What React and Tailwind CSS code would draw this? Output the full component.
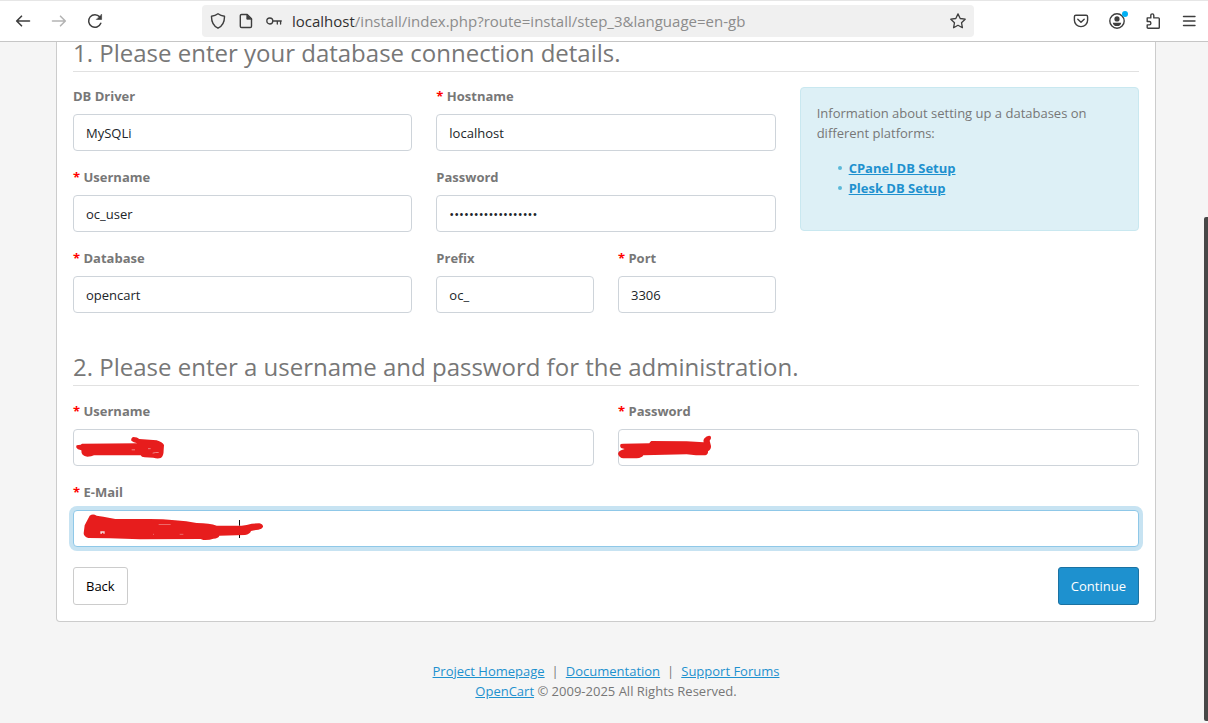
import React from "react";

function Svg({ className = "", w = 16, h = 16, children, ...rest }) {
  return (
    <svg
      width={w}
      height={h}
      viewBox={`0 0 ${w} ${h}`}
      fill="none"
      stroke="currentColor"
      strokeWidth="1.4"
      strokeLinecap="round"
      strokeLinejoin="round"
      className={`shrink-0 ${className}`}
      aria-hidden="true"
      {...rest}
    >
      {children}
    </svg>
  );
}

function BrowserBar() {
  return (
    <header className="flex h-[42px] shrink-0 items-center border-t border-b border-t-[#e6e6e6] border-b-[#c6c6c6] bg-white pr-[11px] text-[#3e3e3e]">
      <nav className="flex w-[202px] shrink-0 items-center gap-5 pl-[15px]">
        <button aria-label="Go back" className="block">
          <Svg strokeWidth="1.6">
            <path d="M14.5 8H1.8M6.5 3.2 1.7 8l4.8 4.8" />
          </Svg>
        </button>
        <button aria-label="Go forward" className="block text-[#b4b4b4]" disabled>
          <Svg strokeWidth="1.6">
            <path d="M1.5 8h12.7M9.5 3.2 14.3 8l-4.8 4.8" />
          </Svg>
        </button>
        <button aria-label="Reload" className="block">
          <Svg>
            <path d="M13.8 10.3A6.3 6.3 0 1 1 12.8 4" strokeWidth="1.5" />
            <path d="M14.6 1.500v5h-5z" fill="currentColor" strokeWidth="0.6" />
          </Svg>
        </button>
      </nav>
      <div className="flex h-8 min-w-0 flex-1 items-center rounded-[4px] bg-[#f0f0f0] px-2">
        <div className="flex items-center gap-3">
          <Svg>
            <path d="M8 .8c2 1.600 4.200 2.300 6.500 2.500.1 5.500-1.800 9.600-6.500 11.900C3.300 12.900 1.400 8.800 1.500 3.300 3.800 3.100 6 2.400 8 .8z" />
          </Svg>
          <Svg>
            <path d="M3.600 1.500h5.600l4.300 4.300v7.400c0 .8-.5 1.300-1.300 1.300H3.600c-.8 0-1.300-.5-1.300-1.300V2.800c0-.8.5-1.300 1.300-1.300z" />
            <path d="M8.800 1.500v4.700h4.700z" fill="currentColor" strokeWidth="0.8" />
          </Svg>
          <Svg strokeWidth="1.3">
            <circle cx="3.800" cy="8" r="3" />
            <path d="M7 8h8.300M11.300 8v3M14.600 8v3" />
          </Svg>
        </div>
        <div className="min-w-0 flex-1 truncate pl-[10px] text-[15px] leading-5 text-[#8c8c8c]">
          <span className="text-[#303030]">localhost</span>
          /install/index.php?route=install/step_3&amp;language=en-gb
        </div>
        <button aria-label="Bookmark this page" className="block">
          <Svg>
            <path d="m8 .9 2.200 4.600 5 .7-3.700 3.500.9 5L8 12.300l-4.400 2.400.9-5L.8 6.200l5-.7z" strokeWidth="1.3" />
          </Svg>
        </button>
      </div>
      <div className="flex items-center gap-5 pl-[99px]">
        <button aria-label="Save to Pocket" className="block">
          <Svg>
            <path d="M2.900 2.200h10.200c.9 0 1.500.6 1.500 1.500v3.500c0 3.700-2.900 6.400-6.600 6.400S1.400 10.900 1.400 7.200V3.700c0-.9.600-1.500 1.500-1.500z" />
            <path d="M4.800 6.200 8 9.300l3.200-3.100" />
          </Svg>
        </button>
        <button aria-label="Account" className="relative block">
          <Svg>
            <circle cx="8" cy="8" r="7.2" />
            <circle cx="8" cy="5.900" r="2.6" fill="currentColor" stroke="none" />
            <path d="M3.800 9.700h8.400c0 2-1.800 3.400-4.200 3.400s-4.200-1.400-4.200-3.400z" fill="currentColor" stroke="none" />
          </Svg>
          <span className="absolute -top-[2px] -right-[3px] size-[6px] rounded-full bg-[#00b0f4]" />
        </button>
        <button aria-label="Extensions" className="block">
          <Svg>
            <path d="M2.200 4.900h3.600V2.400a1.500 1.500 0 0 1 3 0v2.500h4.600c.5 0 .9.400.9.900v8.600c0 .5-.4.900-.9.900H3.100c-.5 0-.9-.4-.9-.9v-2.500h2a1.700 1.700 0 0 0 0-3.400h-2z" />
          </Svg>
        </button>
        <button aria-label="Open application menu" className="block">
          <Svg>
            <path d="M2.500 3.500h11.500M2.500 8h11.500M2.500 12.500h11.500" />
          </Svg>
        </button>
      </div>
    </header>
  );
}

const control =
  "block h-[37px] w-full appearance-none rounded-[4px] border bg-white px-3 text-[13px] leading-5 text-[#212529] outline-none";

function Field({ id, label, required, className = "", children }) {
  return (
    <div className={className}>
      <label htmlFor={id} className="mb-[9px] block text-[13px] leading-[18px] font-bold text-[#777]">
        {required && <span className="text-[#f00]">* </span>}
        {label}
      </label>
      <div className="relative">{children}</div>
    </div>
  );
}

function TextInput({ focused, ...props }) {
  const look = focused
    ? "border-[#8fc8e8] shadow-[0_0_0_4px_#c7e3f2]"
    : "border-[#ced4da]";
  return <input className={`${control} ${look}`} {...props} />;
}

function Scribble({ box, d, children }) {
  return (
    <svg
      width="200"
      height="37"
      viewBox={box}
      className="pointer-events-none absolute top-0 left-0"
      aria-hidden="true"
    >
      <path d={d} fill="#e71d1d" />
      {children}
    </svg>
  );
}

function Legend({ children }) {
  return (
    <h2 className="border-b border-[#e1e1e1] pb-[7px] text-[24px] leading-[22px] text-[#777]">
      {children}
    </h2>
  );
}

function TextLink({ children }) {
  return (
    <a href="#" className="text-[#1e91cf] underline">
      {children}
    </a>
  );
}

function GuideItem({ children }) {
  return (
    <li className="flex items-center gap-[7px]">
      <span className="size-1 rounded-full bg-[#5bb9d8]" />
      <TextLink>{children}</TextLink>
    </li>
  );
}

export default function App() {
  return (
    <div className="relative flex min-h-screen flex-col bg-[#f5f5f5] font-['Open_Sans','Noto_Sans',sans-serif] text-[13px] leading-5 text-[#777]">
      <BrowserBar />
      <main className="mr-[52px] ml-[56px]">
        <form
          className="rounded-b-[4px] border border-t-0 border-[#ccc] bg-white px-4 pb-4"
          onSubmit={(e) => e.preventDefault()}
        >
          <Legend>1. Please enter your database connection details.</Legend>
          <div className="mt-[15px] grid grid-cols-3 gap-x-6">
            <div className="col-span-2 grid grid-cols-4 gap-x-6 gap-y-[17px]">
              <Field id="db-driver" label="DB Driver" className="col-span-2">
                <select id="db-driver" className={`${control} border-[#ced4da]`}>
                  <option>MySQLi</option>
                </select>
              </Field>
              <Field id="db-host" label="Hostname" required className="col-span-2">
                <TextInput id="db-host" defaultValue="localhost" />
              </Field>
              <Field id="db-user" label="Username" required className="col-span-2">
                <TextInput id="db-user" defaultValue="oc_user" />
              </Field>
              <Field id="db-pass" label="Password" className="col-span-2">
                <TextInput id="db-pass" type="password" defaultValue="opencart-database1" />
              </Field>
              <Field id="db-name" label="Database" required className="col-span-2">
                <TextInput id="db-name" defaultValue="opencart" />
              </Field>
              <Field id="db-prefix" label="Prefix">
                <TextInput id="db-prefix" defaultValue="oc_" />
              </Field>
              <Field id="db-port" label="Port" required>
                <TextInput id="db-port" defaultValue="3306" />
              </Field>
            </div>
            <aside className="self-start rounded-[4px] border border-[#c9e8f0] bg-[#ddf0f6] px-4 pt-[15px] pb-[17px]">
              <p>Information about setting up a databases on different platforms:</p>
              <ul className="my-[15px] pl-[21px] font-bold">
                <GuideItem>CPanel DB Setup</GuideItem>
                <GuideItem>Plesk DB Setup</GuideItem>
              </ul>
            </aside>
          </div>
          <div className="mt-[43px]">
            <Legend>2. Please enter a username and password for the administration.</Legend>
          </div>
          <div className="mt-4 grid grid-cols-2 gap-x-6 gap-y-[17px]">
            <Field id="admin-user" label="Username" required>
              <TextInput id="admin-user" />
              <Scribble
                box="69 87 600 111"
                d="M80 136Q76 143 84 148L94 151Q93 168 112 170Q125 170 132 166L272 166Q274 172 284 172L310 173Q322 177 332 174Q341 170 341 150L342 135Q337 126 320 121L268 117Q262 111 250 111Q242 114 244 122Q250 127 262 130L96 131L92 134Z"
              >
                <path d="M245 149.500h10M294 146h8M308 159.500q9-3 18-2" fill="none" stroke="#f5b5b5" strokeWidth="2" />
              </Scribble>
            </Field>
            <Field id="admin-pass" label="Password" required>
              <TextInput id="admin-pass" type="password" />
              <Scribble
                box="84 87 600 111"
                d="M92 132Q88 138 93 144L104 147Q84 152 84 162Q88 174 100 175L140 175Q156 174 160 166L290 163L318 166L346 166Q355 163 354 154Q364 148 363 138L359 122Q366 114 361 108Q352 105 342 116Q339 122 341 127L290 124L184 123Q180 126 178 130L100 131Z"
              />
            </Field>
            <Field id="admin-email" label="E-Mail" required className="col-span-2">
              <TextInput id="admin-email" type="email" focused />
              <Scribble
                box="69 330 600 111"
                d="M119 347Q129 340 140 347L160 350L196 357L300 357Q380 358 440 369Q480 369 500 377L575 377Q590 375 605 371L628 370Q640 373 639 381Q636 388 625 389Q612 390 603 393Q600 402 585 405L508 407Q506 415 490 416Q478 421 460 420L452 417L270 418L180 415L115 414Q101 410 101 400L104 376Z"
              >
                <path d="M568.500 360V377M568.500 405V414" stroke="#111" strokeWidth="3" />
                <path d="M326 373.500H362M389 403h11M309 403h3" stroke="#f3b5b5" strokeWidth="1.5" />
                <path d="M151 401v-7h13v7h-4v-3h-4v3z" fill="#f5dcdc" />
              </Scribble>
            </Field>
          </div>
          <div className="mt-5 flex items-center justify-between">
            <button
              type="button"
              className="h-[38px] rounded-[3px] border border-[#ccc] bg-white px-3 text-black"
            >
              Back
            </button>
            <button
              type="submit"
              className="h-[38px] rounded-[3px] border border-[#1b72a2] bg-[#1e91cf] px-3 text-white"
            >
              Continue
            </button>
          </div>
        </form>
        <footer className="mt-[39px] text-center">
          <p>
            <TextLink>Project Homepage</TextLink>
            <span className="mx-[7px]">|</span>
            <TextLink>Documentation</TextLink>
            <span className="mx-[7px]">|</span>
            <TextLink>Support Forums</TextLink>
          </p>
          <p>
            <TextLink>OpenCart</TextLink> © 2009-2025 All Rights Reserved.
          </p>
        </footer>
      </main>
      <div className="absolute top-[217px] right-0 bottom-[2px] w-1 rounded-l-[2px] bg-[#474747]" />
    </div>
  );
}
